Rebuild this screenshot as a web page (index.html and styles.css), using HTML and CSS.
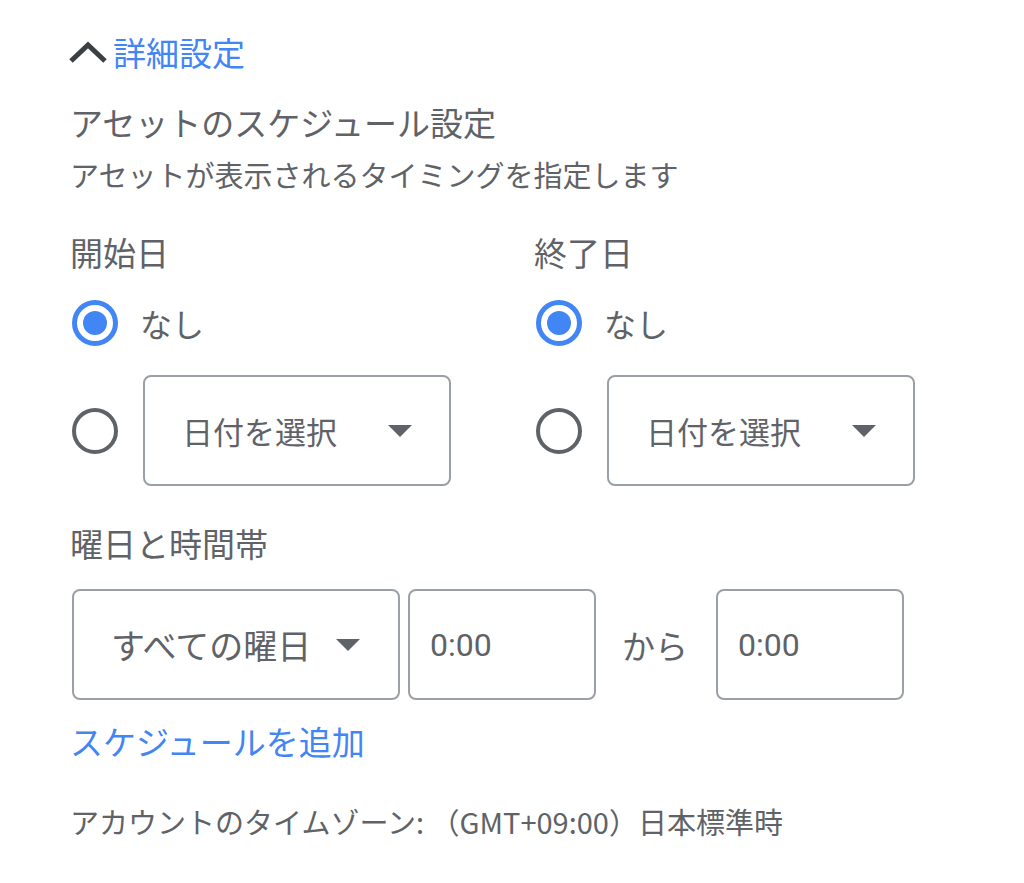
FILE: index.html
```html
<!DOCTYPE html>
<html lang="ja">
<head>
<meta charset="utf-8">
<link rel="stylesheet" href="styles.css">
</head>
<body>
<div class="panel">
  <div class="toggle">
    <svg class="chev" width="40" height="22" viewBox="0 0 40 22"><path d="M3 20 L20 4 L37 20" fill="none" stroke="#3c4043" stroke-width="5"/></svg>
    <span class="toggle-text">詳細設定</span>
  </div>
  <div class="title">アセットのスケジュール設定</div>
  <div class="subtitle">アセットが表示されるタイミングを指定します</div>

  <div class="dates">
    <div class="col">
      <div class="label">開始日</div>
      <div class="radio-row">
        <span class="radio checked"></span>
        <span class="radio-text">なし</span>
      </div>
      <div class="radio-row second">
        <span class="radio"></span>
        <div class="select date-select"><span>日付を選択</span><span class="arrow"></span></div>
      </div>
    </div>
    <div class="col">
      <div class="label">終了日</div>
      <div class="radio-row">
        <span class="radio checked"></span>
        <span class="radio-text">なし</span>
      </div>
      <div class="radio-row second">
        <span class="radio"></span>
        <div class="select date-select"><span>日付を選択</span><span class="arrow"></span></div>
      </div>
    </div>
  </div>

  <div class="label sched-label">曜日と時間帯</div>
  <div class="sched-row">
    <div class="select day-select"><span>すべての曜日</span><span class="arrow"></span></div>
    <div class="time">0:00</div>
    <span class="kara">から</span>
    <div class="time">0:00</div>
  </div>
  <div class="add-link">スケジュールを追加</div>
  <div class="tz">アカウントのタイムゾーン: （GMT+09:00）日本標準時</div>
</div>
</body>
</html>
```
FILE: styles.css
```css
html, body {
  margin: 0;
  padding: 0;
  background: #ffffff;
}
body {
  font-family: "Noto Sans CJK JP", "Noto Sans", sans-serif;
  color: #5f6368;
}
.panel {
  padding: 30px 0 0 70px;
  width: 940px;
}
.toggle {
  display: flex;
  align-items: center;
  height: 44px;
}
.chev {
  margin-left: -2px;
  margin-right: 5px;
  margin-top: 0;
}
.toggle-text {
  color: #4285f4;
  font-size: 33px;
  line-height: 44px;
}
.title {
  font-size: 33px;
  line-height: 44px;
  margin-top: 26px;
  color: #5f6368;
}
.subtitle {
  font-size: 29px;
  line-height: 40px;
  margin-top: 10px;
}
.dates {
  display: flex;
  margin-top: 36px;
}
.col {
  width: 464px;
  flex: none;
}
.label {
  font-size: 33px;
  line-height: 44px;
}
.radio-row {
  display: flex;
  align-items: center;
  margin-top: 26px;
  height: 46px;
}
.radio-row.second {
  margin-top: 29px;
  height: 111px;
}
.radio {
  box-sizing: border-box;
  width: 46px;
  height: 46px;
  border-radius: 50%;
  border: 4px solid #5f6368;
  flex: none;
  margin-left: 2px;
  position: relative;
}
.radio.checked {
  border: 5px solid #4285f4;
}
.radio.checked::after {
  content: "";
  position: absolute;
  left: 6px;
  top: 6px;
  width: 24px;
  height: 24px;
  border-radius: 50%;
  background: #4285f4;
}
.radio-text {
  font-size: 32px;
  line-height: 44px;
  margin-left: 22px;
}
.select {
  box-sizing: border-box;
  display: flex;
  align-items: center;
  justify-content: space-between;
  border: 2px solid #9aa0a6;
  border-radius: 8px;
  height: 111px;
  font-size: 31px;
  color: #5f6368;
}
.date-select {
  width: 308px;
  margin-left: 25px;
  padding: 0 37px 0 37px;
}
.arrow {
  width: 0;
  height: 0;
  border-left: 12px solid transparent;
  border-right: 12px solid transparent;
  border-top: 12px solid #5f6368;
}
.sched-label {
  margin-top: 35px;
}
.sched-row {
  display: flex;
  align-items: center;
  margin-top: 24px;
  margin-left: 2px;
}
.day-select {
  width: 328px;
  padding: 0 38px 0 37px;
  font-size: 34px;
}
.time {
  box-sizing: border-box;
  width: 188px;
  height: 111px;
  border: 2px solid #9aa0a6;
  border-radius: 8px;
  font-family: "Roboto", "Noto Sans", sans-serif;
  font-size: 32px;
  display: flex;
  align-items: center;
  padding-left: 20px;
  margin-left: 8px;
}
.kara {
  font-size: 33px;
  margin: 0 28px 0 26px;
}
.kara + .time {
  margin-left: 0;
}
.add-link {
  color: #4285f4;
  font-size: 33px;
  line-height: 44px;
  margin-top: 19px;
}
.tz {
  font-size: 29px;
  line-height: 40px;
  margin-top: 38px;
}
```
